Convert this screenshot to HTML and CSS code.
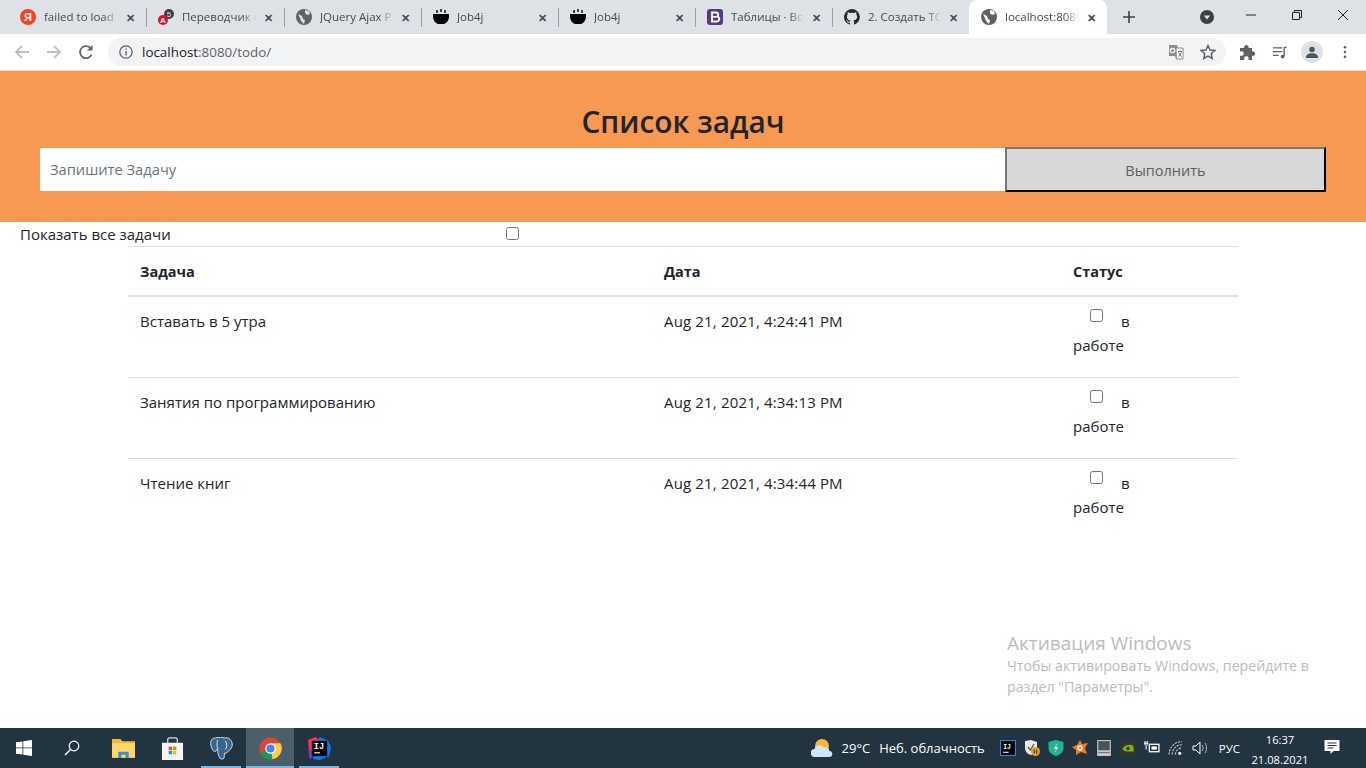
FILE: index.html
```html
<!DOCTYPE html>
<html lang="ru">
<head>
  <meta charset="UTF-8">
  <title>Список задач</title>
  <link rel="stylesheet" href="styles.css">
</head>
<body>
<div class="screen">
  <!-- tab strip -->
  <div class="tabstrip">
    <div class="tab tab-wide">
      <svg class="fav" viewBox="0 0 16 16"><circle cx="8" cy="8" r="8" fill="#fc3f1d"/><text class="fav-ya" x="8" y="12">Я</text></svg>
      <span class="tab-title">failed to load</span><span class="tab-x">&#10005;</span>
    </div>
    <div class="tab tab-wide">
      <svg class="fav" viewBox="0 0 16 16"><circle cx="11" cy="5" r="5" fill="#3c4043"/><text class="fav-num" x="11" y="8">5</text><circle cx="5" cy="11" r="5" fill="#ea0a1e"/><text class="fav-a" x="5" y="14">A</text></svg>
      <span class="tab-title">Переводчик с</span><span class="tab-x">&#10005;</span>
    </div>
    <div class="tab">
      <svg class="fav" viewBox="0 0 16 16"><circle cx="8" cy="8" r="8" fill="#5f6368"/><path d="M2 5l4 2 1 3 2 1-1 4-3-3-1-3zM9 1l4 1 1 3-3 1-2-2z" fill="#dee1e6"/></svg>
      <span class="tab-title">JQuery Ajax Р</span><span class="tab-x">&#10005;</span>
    </div>
    <div class="tab">
      <svg class="fav" viewBox="0 0 16 16"><path d="M0 5h16v2c0 4-2 7-5 8H5C2 14 0 11 0 7z" fill="#000"/><path d="M4 1v3M8 0v3M12 1v3" stroke="#000" stroke-width="1.4"/></svg>
      <span class="tab-title">Job4j</span><span class="tab-x">&#10005;</span>
    </div>
    <div class="tab">
      <svg class="fav" viewBox="0 0 16 16"><path d="M0 5h16v2c0 4-2 7-5 8H5C2 14 0 11 0 7z" fill="#000"/><path d="M4 1v3M8 0v3M12 1v3" stroke="#000" stroke-width="1.4"/></svg>
      <span class="tab-title">Job4j</span><span class="tab-x">&#10005;</span>
    </div>
    <div class="tab">
      <svg class="fav" viewBox="0 0 16 16"><rect width="16" height="16" rx="3" fill="#563d7c"/><path d="M5 3.500h4a2.200 2.200 0 0 1 1.200 4.100A2.400 2.400 0 0 1 9.300 12.500H5z" fill="none" stroke="#fff" stroke-width="1.800"/><path d="M5 7.800h4" stroke="#fff" stroke-width="1.600"/></svg>
      <span class="tab-title">Таблицы · Вос</span><span class="tab-x">&#10005;</span>
    </div>
    <div class="tab">
      <svg class="fav" viewBox="0 0 16 16"><path d="M8 0a8 8 0 0 0-2.500 15.600c.4.1.5-.2.5-.4v-1.400c-2.200.5-2.700-1-2.700-1-.4-.9-.9-1.200-.9-1.200-.7-.5.100-.5.100-.5.800.1 1.200.8 1.200.8.700 1.200 1.900.9 2.300.7.100-.5.300-.9.500-1.100-1.800-.2-3.600-.9-3.600-4 0-.9.300-1.600.8-2.100-.1-.2-.4-1 .1-2.100 0 0 .7-.2 2.200.8a7.600 7.600 0 0 1 4 0c1.500-1 2.200-.8 2.200-.8.400 1.100.2 1.900.1 2.100.5.600.8 1.300.8 2.100 0 3.100-1.900 3.700-3.700 3.900.3.300.6.700.6 1.500v2.200c0 .2.100.5.600.4A8 8 0 0 0 8 0z" fill="#24292e"/></svg>
      <span class="tab-title">2. Создать ТО</span><span class="tab-x">&#10005;</span>
    </div>
    <div class="tab tab-active">
      <svg class="fav" viewBox="0 0 16 16"><circle cx="8" cy="8" r="8" fill="#5f6368"/><path d="M2 5l4 2 1 3 2 1-1 4-3-3-1-3zM9 1l4 1 1 3-3 1-2-2z" fill="#fff"/></svg>
      <span class="tab-title">localhost:8080</span><span class="tab-x">&#10005;</span>
    </div>
    <svg class="new-tab" viewBox="0 0 12 12"><path d="M6 0v12M0 6h12" stroke="#3c4043" stroke-width="1.600"/></svg>
    <div class="strip-right">
      <svg class="tab-search" viewBox="0 0 14 14"><circle cx="7" cy="7" r="7" fill="#3c4043"/><path d="M3.800 5.500h6.400L7 9.500z" fill="#dee1e6"/></svg>
      <div class="winbtn"><svg viewBox="0 0 10 10"><path d="M0 5h10" stroke="#222" stroke-width="1"/></svg></div>
      <div class="winbtn"><svg viewBox="0 0 10 10"><path d="M.5 2.500h7v7h-7zM2.500 2.500v-2h7v7h-2" fill="none" stroke="#222" stroke-width="1"/></svg></div>
      <div class="winbtn"><svg viewBox="0 0 10 10"><path d="M0 0l10 10M10 0L0 10" stroke="#222" stroke-width="1"/></svg></div>
    </div>
  </div>

  <!-- address bar -->
  <div class="toolbar">
    <svg class="nav" viewBox="0 0 16 16"><path d="M15 8H2M8 2L2 8l6 6" fill="none" stroke="#bdc1c6" stroke-width="1.800"/></svg>
    <svg class="nav" viewBox="0 0 16 16"><path d="M1 8h13M8 2l6 6-6 6" fill="none" stroke="#bdc1c6" stroke-width="1.800"/></svg>
    <svg class="nav" viewBox="0 0 16 16"><path d="M13.600 10.500A6 6 0 1 1 12.200 3.800" fill="none" stroke="#5f6368" stroke-width="1.800"/><path d="M14.500 1v5.500H9z" fill="#5f6368"/></svg>
    <div class="omnibox">
      <svg class="info" viewBox="0 0 14 14"><circle cx="7" cy="7" r="6.200" fill="none" stroke="#5f6368" stroke-width="1.300"/><path d="M7 6v4.500M7 3.500v1.300" stroke="#5f6368" stroke-width="1.400"/></svg>
      <span class="url"><b class="url-host">localhost</b>:8080/todo/</span>
      <svg class="omni-icon" viewBox="0 0 16 16"><path d="M1 1h8l1 3h5v11H8l-1-3H1z" fill="#8a8d91"/><path d="M8 4h7v11H8.500z" fill="#fff" stroke="#8a8d91"/><circle cx="4.500" cy="6.500" r="2.200" fill="none" stroke="#fff" stroke-width="1.200"/><path d="M10 7.500h4M12 6.500v1M10.500 12.500l3-4M10.500 8.500l3 4" stroke="#5f6368" stroke-width=".9"/></svg>
      <svg class="omni-icon star" viewBox="0 0 16 16"><path d="M8 1.500l2 4.500 4.800.5-3.600 3.200 1 4.800L8 12.100l-4.200 2.400 1-4.800L1.200 6.500 6 6z" fill="none" stroke="#5f6368" stroke-width="1.500"/></svg>
    </div>
    <svg class="tool puzzle" viewBox="0 0 16 16"><path d="M0 4h4.200a2.300 2.300 0 1 1 4.300 0H12v3.500a2.300 2.300 0 1 1 0 4.300V16H8.500v-1a2.200 2.200 0 1 0-4.300 0v1H0v-4.300h1a2.200 2.200 0 1 0 0-4.300H0z" fill="#5f6368"/></svg>
    <svg class="tool" viewBox="0 0 16 16"><path d="M1 3h10M1 7h10M1 11h6" stroke="#5f6368" stroke-width="1.300"/><path d="M13 2.500v9.500" stroke="#5f6368" stroke-width="1.500"/><path d="M13 2.500h2.500" stroke="#5f6368" stroke-width="1.500"/><circle cx="11.300" cy="12.300" r="2" fill="#5f6368"/></svg>
    <div class="avatar"><svg viewBox="0 0 14 14"><circle cx="7" cy="4" r="3.200" fill="#4a5568"/><path d="M0 14c0-4 3-5.500 7-5.500s7 1.500 7 5.500z" fill="#4a5568"/></svg></div>
    <svg class="menu" viewBox="0 0 4 16"><circle cx="2" cy="2.500" r="1.500" fill="#5f6368"/><circle cx="2" cy="8" r="1.500" fill="#5f6368"/><circle cx="2" cy="13.500" r="1.500" fill="#5f6368"/></svg>
  </div>

  <!-- page -->
  <main class="page">
    <header class="hero">
      <h1>Список задач</h1>
      <form class="add-form">
        <input class="add-input" type="text" placeholder="Запишите Задачу">
        <button class="add-btn" type="button">Выполнить</button>
      </form>
    </header>

    <div class="show-all">
      <label>Показать все задачи</label>
      <input type="checkbox">
    </div>

    <table class="tasks">
      <thead>
        <tr><th>Задача</th><th>Дата</th><th>Статус</th></tr>
      </thead>
      <tbody>
        <tr>
          <td>Вставать в 5 утра</td>
          <td class="date">Aug 21, 2021, 4:24:41 PM</td>
          <td class="status"><input class="st-check" type="checkbox"> в работе</td>
        </tr>
        <tr>
          <td>Занятия по программированию</td>
          <td class="date">Aug 21, 2021, 4:34:13 PM</td>
          <td class="status"><input class="st-check" type="checkbox"> в работе</td>
        </tr>
        <tr>
          <td>Чтение книг</td>
          <td class="date">Aug 21, 2021, 4:34:44 PM</td>
          <td class="status"><input class="st-check" type="checkbox"> в работе</td>
        </tr>
      </tbody>
    </table>

    <div class="watermark">
      <div class="wm-title">Активация Windows</div>
      <div class="wm-text">Чтобы активировать Windows, перейдите в<br>раздел "Параметры".</div>
    </div>
  </main>

  <!-- windows taskbar -->
  <footer class="taskbar">
    <svg class="start" viewBox="0 0 16 16"><path d="M0 2.300l6.500-.9v6.100H0zM7.300 1.300L16 0v7.500H7.300zM0 8.300h6.500v6.200L0 13.700zM7.300 8.300H16V16l-8.700-1.200z" fill="#fff"/></svg>
    <svg class="search" viewBox="0 0 16 16"><circle cx="10" cy="6" r="4.800" fill="none" stroke="#fff" stroke-width="1.200"/><path d="M6.500 9.500L1 15" stroke="#fff" stroke-width="1.400"/></svg>
    <div class="task-app">
      <svg viewBox="0 0 22 20"><path d="M0 1h8l2 2h12v15H0z" fill="#f0b93a"/><path d="M0 5h22v14H0z" fill="#ffd767"/><path d="M6 19v-6h10v6h-3v-3H9v3z" fill="#3b8fd6"/></svg>
    </div>
    <div class="task-app">
      <svg viewBox="0 0 24 24"><path d="M7 6V3a2 2 0 0 1 2-2h6a2 2 0 0 1 2 2v3" fill="none" stroke="#ddd" stroke-width="1.300"/><path d="M1 6h22v18H1z" fill="#f4f4f4"/><path d="M8 10h3.600v3.600H8z" fill="#f25022"/><path d="M12.400 10H16v3.600h-3.600z" fill="#7fba00"/><path d="M8 14.400h3.600V18H8z" fill="#00a4ef"/><path d="M12.400 14.400H16V18h-3.600z" fill="#ffb900"/></svg>
    </div>
    <div class="task-app is-open">
      <svg viewBox="0 0 24 24"><path d="M6 1c-4 0-6 3-5 8 1 3 2 6 4 6 2 0 2-2 3-3 0 5 1 11 5 11 2 0 2-3 2-6 3 0 4-2 5-3 2-2 4-4 3-8-1-4-5-6-8-5-3-1-6-1-9 0z" fill="#336791" stroke="#dfe8ee" stroke-width="1"/><path d="M8 3c-1 4-1 6 0 9M16 4c2 3 2 6 0 9" fill="none" stroke="#dfe8ee" stroke-width="1"/></svg>
    </div>
    <div class="task-app is-active">
      <svg viewBox="0 0 24 24"><circle cx="12" cy="12" r="11.500" fill="#db4437"/><path d="M12 12L1.500 17A11.500 11.500 0 0 0 14 23.300z" fill="#0f9d58"/><path d="M12 6.500h10.400A11.500 11.500 0 0 1 14 23.300z" fill="#ffcd40"/><circle cx="12" cy="12" r="5.500" fill="#fff"/><circle cx="12" cy="12" r="4.300" fill="#4285f4"/></svg>
    </div>
    <div class="task-app is-open">
      <svg viewBox="0 0 24 24"><path d="M0 3l8-3 5 4-8 16-3 3z" fill="#fe315d"/><path d="M12 0l9 4 3 7-2 9-10 4-7-1z" fill="#087cfa"/><path d="M2 23L0 12l8 6z" fill="#7a39c4"/><path d="M4 4h16v16H4z" fill="#000"/><text class="ij-text" x="6" y="13">IJ</text><path d="M6.500 16.500h6" stroke="#fff" stroke-width="1.200"/></svg>
    </div>

    <div class="tray">
      <svg class="weather" viewBox="0 0 22 20"><circle cx="11" cy="8" r="7" fill="#f7b733"/><path d="M4 19a4 4 0 0 1-.5-8 5 5 0 0 1 9-1.500A4.500 4.500 0 0 1 18.500 13 3 3 0 0 1 18 19z" fill="#cfe6f7"/></svg>
      <span class="tray-temp">29°C</span>
      <span class="tray-weather">Неб. облачность</span>
      <div class="tray-icons">
        <svg viewBox="0 0 15 15"><rect x=".5" y=".5" width="14" height="14" fill="#000" stroke="#2f7fe0"/><text class="ij-small" x="3" y="8">IJ</text><path d="M3 11.500h5" stroke="#fff"/></svg>
        <svg viewBox="0 0 16 16"><path d="M1 1l6-1 6 2v6c0 4-3 6-6 7-4-1-6-4-6-7z" fill="#e8e8e8"/><path d="M4 7l2.500 3L10 4" fill="none" stroke="#555" stroke-width="1.300"/><circle cx="11.500" cy="11.500" r="4.500" fill="#f0a30a"/><path d="M10.300 9.500v4M12.700 9.500v4" stroke="#333" stroke-width="1.100"/></svg>
        <svg viewBox="0 0 15 16"><path d="M7.500 0L15 2v6c0 4-3 6.500-7.500 8C3 14.500 0 12 0 8V2z" fill="#1fb58f"/><path d="M9 3L5 9h2.500L6 13l4-6H7.500z" fill="#fff"/></svg>
        <svg viewBox="0 0 16 16"><path d="M8 0l2 4 6-1-3 5 2 6-6-2-5 3 0-5-4-3 5-2z" fill="#f47b20"/><circle cx="8" cy="8" r="2.700" fill="#fff"/><circle cx="8" cy="8" r="1.200" fill="#f47b20"/></svg>
        <svg viewBox="0 0 14 14"><rect x="1" width="12" height="14" fill="#c9c9c9"/><path d="M2 1h10v8H2z" fill="#4b5258"/><path d="M2 11h10" stroke="#777"/></svg>
        <svg viewBox="0 0 14 14"><rect width="14" height="14" rx="2" fill="#333"/><path d="M2 8c2-4 8-5 10-2v4H6C4 10 3 9 2 8z" fill="#76b900"/><circle cx="7" cy="7.500" r="1.500" fill="#333"/></svg>
        <svg viewBox="0 0 15 13"><rect x="5" y="3" width="9" height="7" fill="none" stroke="#fff" stroke-width="1.200"/><rect x="7" y="5" width="5" height="3" fill="#fff"/><path d="M0 2h4M1 0v4M3 0v4M2 4v4" stroke="#fff"/></svg>
        <svg viewBox="0 0 15 14"><path d="M1 13a12 12 0 0 1 12-12M4 13a9 9 0 0 1 9-9M7 13a6 6 0 0 1 6-6" fill="none" stroke="#d0d4d6" stroke-width="1" stroke-dasharray="2 1"/><circle cx="11" cy="12" r="1.500" fill="#fff"/></svg>
        <svg viewBox="0 0 16 14"><path d="M1 5h3l4-4v12l-4-4H1z" fill="none" stroke="#fff" stroke-width="1"/><path d="M10 4c1.500 2 1.500 4 0 6M13 2c2 3 2 7 0 10" fill="none" stroke="#b8bec1" stroke-width="1"/></svg>
      </div>
      <span class="tray-lang">РУС</span>
      <div class="tray-clock"><span>16:37</span><span>21.08.2021</span></div>
      <svg class="notif" viewBox="0 0 16 16"><path d="M0 0h15v11H9l-3 3v-3H0z" fill="#fff"/><path d="M3 3h9M3 5.500h9M3 8h6" stroke="#22343f"/></svg>
    </div>
  </footer>
</div>
</body>
</html>
```

FILE: styles.css
```css
* {
  box-sizing: border-box;
}

html, body {
  margin: 0;
  height: 100%;
  overflow: hidden;
}

body {
  font-family: "Open Sans", "Noto Sans", sans-serif;
  color: #212529;
  background: #fff;
}

.screen {
  height: 768px;
  display: flex;
  flex-direction: column;
}

/* browser chrome */
.tabstrip {
  height: 34px;
  background: #dee1e6;
  display: flex;
  align-items: center;
  padding-left: 8px;
  flex: none;
}

.tab {
  width: 137px;
  height: 34px;
  display: flex;
  align-items: center;
  padding: 0 11px 0 12px;
  gap: 8px;
  font-size: 11.5px;
  color: #45494e;
  position: relative;
  flex: none;
}

.tab-wide {
  width: 138px;
}

.tab::after {
  content: "";
  position: absolute;
  right: -1px;
  top: 8px;
  height: 19px;
  width: 1px;
  background: #9aa0a6;
}

.tab:nth-child(7)::after,
.tab-active::after {
  display: none;
}

.tab-active {
  background: #fff;
  border-radius: 8px 8px 0 0;
  width: 138px;
}

.fav {
  width: 16px;
  height: 16px;
  flex: none;
}

.fav-ya {
  font-family: "Liberation Sans", sans-serif;
  font-size: 11px;
  font-weight: 700;
  fill: #fff;
  text-anchor: middle;
}

.fav-a {
  font-family: "Liberation Sans", sans-serif;
  font-size: 8px;
  font-weight: 700;
  fill: #fff;
  text-anchor: middle;
}

.fav-num {
  font-family: "Liberation Sans", sans-serif;
  font-size: 8px;
  fill: #dee1e6;
  text-anchor: middle;
}

.tab-title {
  flex: 1;
  margin-bottom: 1px;
  white-space: nowrap;
  overflow: hidden;
  -webkit-mask-image: linear-gradient(to right, #000 80%, transparent);
  mask-image: linear-gradient(to right, #000 80%, transparent);
}

.tab-x {
  font-size: 11px;
  font-weight: 700;
  color: #45494e;
  flex: none;
}

.new-tab {
  width: 12px;
  height: 12px;
  margin-left: 16px;
  flex: none;
}

.strip-right {
  margin-left: auto;
  display: flex;
  align-items: center;
}

.tab-search {
  width: 14px;
  height: 14px;
  margin-right: 14px;
}

.winbtn {
  width: 46px;
  height: 29px;
  margin-bottom: 5px;
  display: flex;
  align-items: center;
  justify-content: center;
}

.winbtn svg {
  width: 10px;
  height: 10px;
}

.toolbar {
  height: 37px;
  background: #fff;
  border-bottom: 1px solid #dadce0;
  display: flex;
  align-items: center;
  padding: 0 14px;
  flex: none;
}

.nav {
  width: 16px;
  height: 16px;
  margin-right: 16px;
  flex: none;
}

.omnibox {
  width: 1118px;
  height: 28px;
  margin-left: -2px;
  background: #f1f3f4;
  border-radius: 14px;
  display: flex;
  align-items: center;
  padding: 0 10px 0 11px;
  font-size: 13.4px;
  color: #5f6368;
}

.info {
  width: 14px;
  height: 14px;
  margin-right: 9px;
}

.url {
  flex: 1;
}

.url-host {
  font-weight: 400;
  color: #202124;
}

.omni-icon {
  width: 16px;
  height: 16px;
  margin-right: 16px;
}

.omni-icon.star {
  margin-right: 0;
}

.tool {
  width: 15px;
  height: 15px;
  margin-left: 16px;
  flex: none;
}

.tool.puzzle {
  width: 16px;
  height: 16px;
  margin-left: 14px;
}

.avatar {
  width: 22px;
  height: 22px;
  margin-left: 14px;
  background: #dee1e6;
  border-radius: 50%;
  display: flex;
  align-items: center;
  justify-content: center;
  flex: none;
}

.avatar svg {
  width: 12px;
  height: 12px;
}

.menu {
  width: 4px;
  height: 14px;
  margin-left: 20px;
  flex: none;
}

/* page */
.page {
  flex: 1;
  position: relative;
  background: #fff;
  font-size: 15px;
  line-height: 24px;
}

.hero {
  height: 151px;
  background: #f79952;
  padding: 31px 40px 0;
}

.hero h1 {
  margin: 0 0 5px;
  text-align: center;
  font-size: 29.8px;
  font-weight: 600;
  line-height: 40px;
  color: #212529;
}

.add-form {
  display: flex;
  align-items: center;
  height: 45px;
}

.add-input {
  width: 965px;
  height: 43px;
  border: none;
  background: #fff;
  padding: 0 10px 2px;
  font: inherit;
  font-size: 14.7px;
}

.add-input::placeholder {
  color: #6c757d;
}

.add-btn {
  flex: 1;
  height: 45px;
  border: 2px outset #767676;
  border-color: #767676 #212121 #212121 #767676;
  background: #d8d8d8;
  font: inherit;
  font-size: 14.5px;
  color: #5a5f64;
  padding: 2px 0 0;
}

.show-all {
  display: flex;
  align-items: flex-start;
  height: 24px;
  padding-left: 20px;
}

.show-all label {
  width: 486px;
}

.show-all input {
  width: 13px;
  height: 13px;
  margin: 5px 0 0;
}

.tasks {
  width: 1110px;
  margin-left: 128px;
  border-collapse: collapse;
  table-layout: fixed;
}

.tasks th {
  text-align: left;
  padding: 13px 12px 11px;
  font-size: 14.5px;
  font-weight: 700;
  border-top: 1px solid #dee2e6;
  border-bottom: 2px solid #dee2e6;
  height: 49px;
}

.tasks th:nth-child(1) { width: 524px; }
.tasks th:nth-child(2) { width: 409px; }

.tasks td {
  padding: 12px;
  vertical-align: top;
  border-bottom: 1px solid #dee2e6;
  height: 81px;
}

.tasks tbody tr:last-child td {
  border-bottom: none;
}

.tasks td.date {
  letter-spacing: .16px;
}

.tasks td.status {
  padding-right: 100px;
}

.st-check {
  width: 13px;
  height: 13px;
  margin: -1px 14px 0 17px;
  vertical-align: 5px;
}

.watermark {
  position: absolute;
  left: 1007px;
  top: 560px;
  color: #bcbcbc;
}

.wm-title {
  font-size: 19px;
  line-height: 24px;
}

.wm-text {
  font-size: 14.2px;
  line-height: 21px;
}

/* taskbar */
.taskbar {
  height: 40px;
  background: #21343f;
  display: flex;
  align-items: center;
  flex: none;
  color: #fff;
}

.start {
  width: 16px;
  height: 16px;
  margin: 0 32px 0 16px;
  flex: none;
}

.search {
  width: 16px;
  height: 16px;
  margin-right: 19px;
  flex: none;
}

.task-app {
  width: 48px;
  height: 40px;
  margin-right: 1px;
  display: flex;
  align-items: center;
  justify-content: center;
  flex: none;
}

.task-app svg {
  width: 23px;
  height: 23px;
}

.task-app.is-open {
  background: linear-gradient(#76b9ed, #76b9ed) center bottom / 40px 2px no-repeat;
}

.task-app.is-active {
  background: #4c5f68;
  box-shadow: inset 0 -2px 0 #76b9ed;
}

.ij-text {
  font-family: "Liberation Mono", monospace;
  font-size: 9px;
  font-weight: 700;
  fill: #fff;
}

.ij-small {
  font-family: "Liberation Mono", monospace;
  font-size: 6px;
  font-weight: 700;
  fill: #fff;
}

.tray {
  margin-left: auto;
  display: flex;
  align-items: center;
  height: 40px;
  font-size: 13px;
}

.weather {
  width: 22px;
  height: 20px;
  margin-right: 9px;
}

.tray-temp {
  margin-right: 9px;
}

.tray-weather {
  margin-right: 15px;
}

.tray-icons {
  display: flex;
  align-items: center;
  gap: 8px;
}

.tray-icons svg {
  width: 16px;
  height: 16px;
}

.tray-lang {
  font-size: 11.5px;
  margin-left: 11px;
}

.tray-clock {
  display: flex;
  flex-direction: column;
  align-items: center;
  font-size: 11.2px;
  line-height: 20px;
  padding-top: 3px;
  margin-left: 10px;
  width: 60px;
}

.notif {
  width: 17px;
  height: 16px;
  margin: 0 25px 0 14px;
}
```
